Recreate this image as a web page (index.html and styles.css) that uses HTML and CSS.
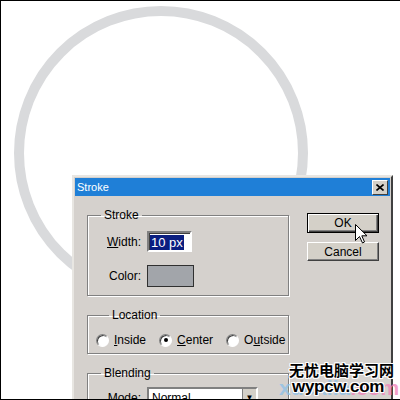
FILE: index.html
```html
<!DOCTYPE html>
<html lang="en">
<head>
    <meta charset="UTF-8">
    <meta name="viewport" content="width=device-width, initial-scale=1.0">
    <title>Stroke</title>
    <link rel="stylesheet" href="styles.css">
</head>
<body>
    <div class="screen">
        <div class="ring"></div>

        <div class="dialog">
            <div class="titlebar">
                <span class="title">Stroke</span>
                <span class="close-btn">
                    <svg width="8" height="7" viewBox="0 0 8 7">
                        <path d="M0.5 0.5 L7.5 6.5 M7.5 0.5 L0.5 6.5" stroke="#000" stroke-width="1.6" fill="none"/>
                    </svg>
                </span>
            </div>
            <div class="dialog-body">
                <div class="left-col">
                    <fieldset class="group group-stroke">
                        <legend>Stroke</legend>
                        <div class="field-grid">
                            <label class="field-label"><u>W</u>idth:</label>
                            <span class="text-input"><span class="selected">10 px</span></span>
                            <label class="field-label">Color:</label>
                            <span class="swatch"></span>
                        </div>
                    </fieldset>
                    <fieldset class="group group-location">
                        <legend>Location</legend>
                        <div class="radios">
                            <span class="radio-item"><span class="radio"></span><span><u>I</u>nside</span></span>
                            <span class="radio-item"><span class="radio checked"></span><span><u>C</u>enter</span></span>
                            <span class="radio-item"><span class="radio"></span><span>O<u>u</u>tside</span></span>
                        </div>
                    </fieldset>
                    <fieldset class="group group-blending">
                        <legend>Blending</legend>
                        <div class="field-grid">
                            <label class="field-label">M<u>o</u>de:</label>
                            <span class="select"><span>Normal</span><span class="drop-btn">&#9660;</span></span>
                        </div>
                    </fieldset>
                </div>
                <div class="right-col">
                    <span class="btn btn-default">OK</span>
                    <span class="btn">Cancel</span>
                </div>
            </div>
        </div>

        <svg class="pointer" width="13" height="20" viewBox="0 0 13 20">
            <path d="M0.5 0.5 L0.5 16.5 L4.5 12.5 L7.5 19 L9.5 18 L6.8 11.8 L12 11.8 Z" fill="#fff" stroke="#000" stroke-width="1"/>
        </svg>

        <div class="watermark">
            <span class="wm-back"><span class="wm-blue">xuexila</span><span class="wm-pink">.com</span></span>
            <span class="wm-cn">无忧电脑学习网</span>
            <span class="wm-site">wypcw.com</span>
        </div>
    </div>
</body>
</html>
```

FILE: styles.css
```css
body {
    margin: 0;
    background-color: #fff;
    font-family: 'Liberation Sans', Arial, sans-serif;
}
.screen {
    position: relative;
    width: 400px;
    height: 400px;
    overflow: hidden;
    box-sizing: border-box;
    border-top: 1px solid #000;
    border-left: 1px solid #000;
    border-bottom: 1px solid #000;
    background-color: #fff;
}
.ring {
    position: absolute;
    left: 13px;
    top: 5px;
    width: 274px;
    height: 274px;
    border: 10px solid #d9dadc;
    border-radius: 50%;
}
.dialog {
    position: absolute;
    left: 71px;
    top: 174px;
    width: 315px;
    height: 240px;
    padding: 1px;
    border: 2px solid;
    border-color: #e8e6e2 #404040 #404040 #e8e6e2;
    background-color: #d5d1cd;
    color: #000;
    font-size: 12px;
}
.titlebar {
    height: 18px;
    background-color: #1f7fd7;
    display: flex;
    align-items: center;
    justify-content: space-between;
    padding: 0 2px;
}
.title {
    color: #fff;
    font-size: 11px;
}
.close-btn {
    width: 14px;
    height: 13px;
    background-color: #d4d0c8;
    border: 1px solid;
    border-color: #fff #404040 #404040 #fff;
    display: flex;
    align-items: center;
    justify-content: center;
}
.dialog-body {
    display: flex;
    align-items: flex-start;
    padding: 12px 0 0 12px;
}
.left-col {
    width: 202px;
    display: flex;
    flex-direction: column;
    gap: 12px;
}
.group {
    margin: 0;
    padding: 9px 0 8px 0;
    border: 1px solid #808080;
    box-shadow: 1px 1px 0 #fff, inset 1px 1px 0 #fff;
    min-width: 0;
}
.group legend {
    margin-left: 13px;
    padding: 0 3px;
    line-height: 14px;
    font-size: 12px;
}
.group-location {
    padding: 10px 0 5px 8px;
}
.group-blending {
    padding-top: 7px;
}
.field-grid {
    display: grid;
    grid-template-columns: 53px auto;
    column-gap: 6px;
    row-gap: 13px;
    align-items: center;
    justify-items: start;
}
.field-label {
    justify-self: end;
}
.text-input {
    box-sizing: border-box;
    width: 45px;
    height: 21px;
    background-color: #fff;
    border: 2px solid;
    border-color: #808080 #fff #fff #808080;
    box-shadow: inset 1px 1px 0 #404040;
    padding: 2px 0 0 1px;
}
.selected {
    display: inline-block;
    background-color: #0a1e80;
    color: #fff;
    line-height: 15px;
    padding: 0 1px;
    font-size: 13px;
}
.swatch {
    box-sizing: border-box;
    width: 47px;
    height: 22px;
    border: 1px solid #303030;
    background-color: #a2a5aa;
}
.radios {
    display: flex;
    gap: 13px;
    height: 16px;
    align-items: center;
}
.radio-item {
    display: flex;
    align-items: center;
    gap: 5px;
}
.radio {
    box-sizing: border-box;
    width: 13px;
    height: 13px;
    border-radius: 50%;
    background-color: #fff;
    border: 1px solid;
    border-color: #808080 #fff #fff #808080;
    box-shadow: inset 1px 1px 0 #404040;
    display: flex;
    align-items: center;
    justify-content: center;
}
.radio.checked::after {
    content: '';
    width: 4px;
    height: 4px;
    border-radius: 50%;
    background-color: #000;
}
.select {
    box-sizing: border-box;
    width: 111px;
    height: 21px;
    background-color: #fff;
    border: 2px solid;
    border-color: #808080 #fff #fff #808080;
    display: flex;
    align-items: center;
    justify-content: space-between;
    padding-left: 3px;
}
.drop-btn {
    width: 13px;
    height: 17px;
    background-color: #d4d0c8;
    border-left: 1px solid #808080;
    font-size: 8px;
    display: flex;
    align-items: center;
    justify-content: center;
}
.right-col {
    margin-left: 18px;
    margin-top: 5px;
    display: flex;
    flex-direction: column;
    gap: 9px;
}
.btn {
    box-sizing: border-box;
    width: 72px;
    height: 19px;
    background-color: #d4d0c8;
    border: 1px solid;
    border-color: #fff #404040 #404040 #fff;
    box-shadow: inset -1px -1px 0 #808080;
    display: flex;
    align-items: center;
    justify-content: center;
    font-size: 12px;
}
.btn-default {
    height: 20px;
    border: 1px solid #000;
    box-shadow: inset 1px 1px 0 #fff, inset -1px -1px 0 #404040, inset -2px -2px 0 #808080;
}
.pointer {
    position: absolute;
    left: 354px;
    top: 223px;
}
.watermark {
    position: absolute;
    left: 277px;
    top: 358px;
    width: 123px;
    height: 42px;
}
.wm-back {
    position: absolute;
    left: 1px;
    top: 17px;
    font-size: 21px;
    font-weight: bold;
    white-space: nowrap;
    opacity: 0.75;
}
.wm-blue {
    color: #8cc0e8;
}
.wm-pink {
    color: #f080b8;
}
.wm-cn {
    position: absolute;
    left: 11px;
    top: 2px;
    font-family: 'Noto Sans CJK SC', sans-serif;
    font-size: 15px;
    font-weight: bold;
    line-height: 18px;
    white-space: nowrap;
    color: #000;
    text-shadow: 1px 0 #fff, -1px 0 #fff, 0 1px #fff, 0 -1px #fff, 1px 1px #fff, -1px -1px #fff, 1px -1px #fff, -1px 1px #fff;
}
.wm-site {
    position: absolute;
    left: 14px;
    top: 17px;
    font-size: 17px;
    font-weight: bold;
    line-height: 22px;
    letter-spacing: -0.3px;
    white-space: nowrap;
    color: #000;
    text-shadow: 1px 0 #fff, -1px 0 #fff, 0 1px #fff, 0 -1px #fff, 1px 1px #fff, -1px -1px #fff, 1px -1px #fff, -1px 1px #fff;
}
```
